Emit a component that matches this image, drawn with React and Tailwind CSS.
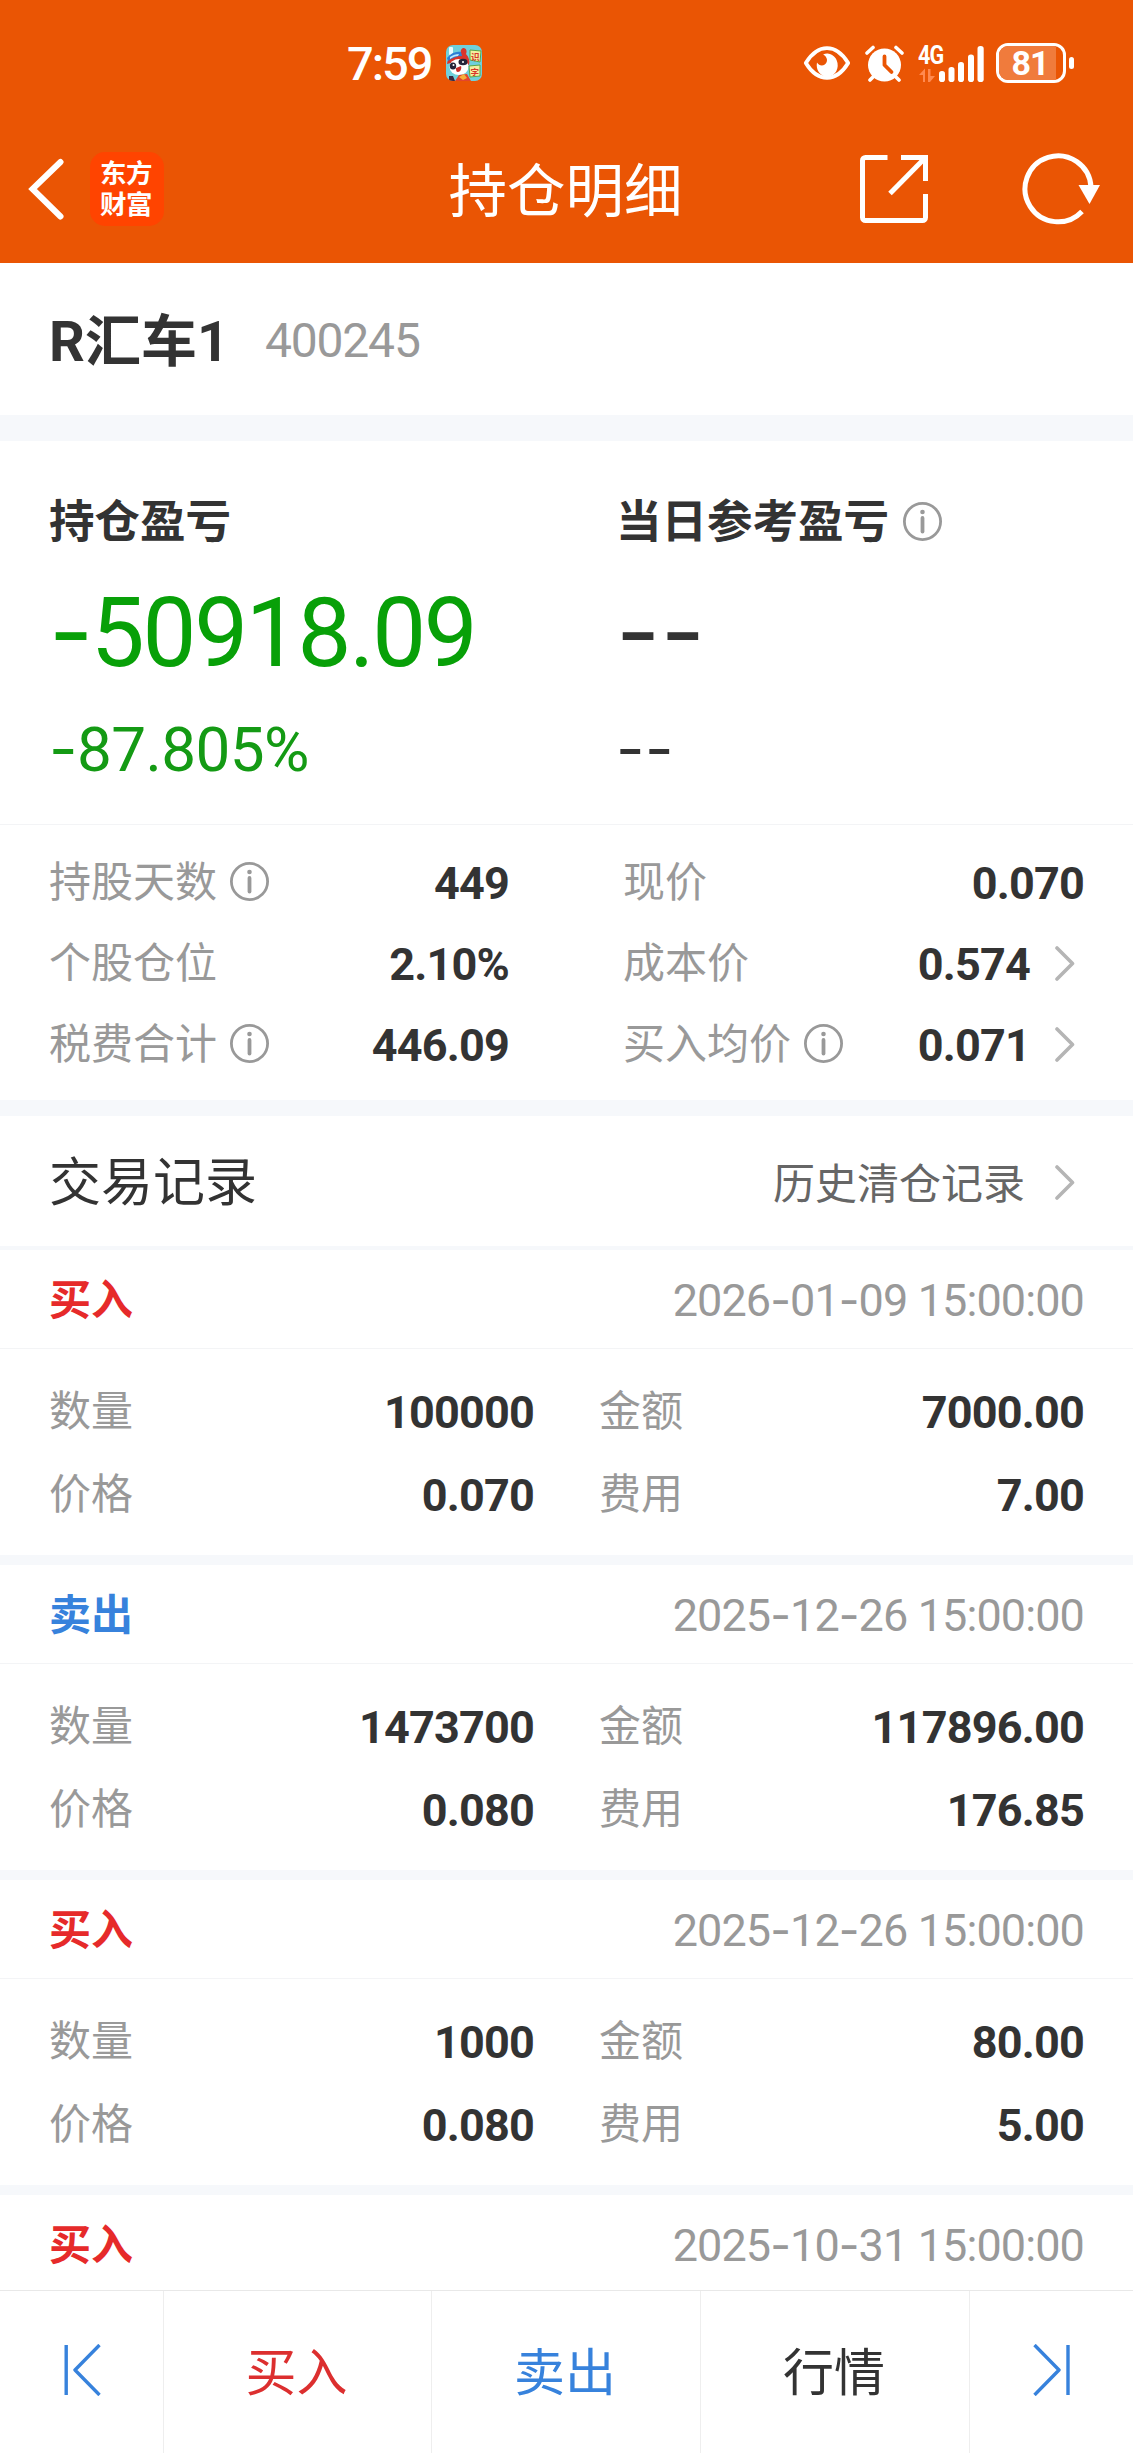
import React from 'react';

const summary = [
  [
    { label: '持股天数', info: true, value: '449' },
    { label: '个股仓位', value: '2.10%' },
    { label: '税费合计', info: true, value: '446.09' },
  ],
  [
    { label: '现价', value: '0.070' },
    { label: '成本价', value: '0.574', link: true },
    { label: '买入均价', info: true, value: '0.071', link: true },
  ],
];

const records = [
  { side: 'buy', time: '2026-01-09 15:00:00', qty: '100000', amount: '7000.00', price: '0.070', fee: '7.00' },
  { side: 'sell', time: '2025-12-26 15:00:00', qty: '1473700', amount: '117896.00', price: '0.080', fee: '176.85' },
  { side: 'buy', time: '2025-12-26 15:00:00', qty: '1000', amount: '80.00', price: '0.080', fee: '5.00' },
  { side: 'buy', time: '2025-10-31 15:00:00' },
];

// Roboto's hyphen is too short next to its digits, so hyphens are set in Inter
function Num({ children, className }) {
  return (
    <span className={className}>
      {children.split(/(-)/).map((part, i) =>
        part === '-' ? <span key={i} className="font-['Inter']">-</span> : part
      )}
    </span>
  );
}

function InfoIcon() {
  return (
    <svg className="w-[39px] h-[39px] shrink-0 mb-0.5" viewBox="0 0 39 39" fill="none">
      <circle cx="19.5" cy="19.5" r="18.1" stroke="#999" strokeWidth="2.8" />
      <circle cx="19.5" cy="10" r="2.3" fill="#999" />
      <path d="M19.5 16v13.5" stroke="#999" strokeWidth="3.8" strokeLinecap="round" />
    </svg>
  );
}

function Chevron() {
  return (
    <svg className="w-5 h-[35px] shrink-0" viewBox="0 0 20 35" fill="none">
      <path d="M2 2l15.5 15.5L2 33" stroke="#b5b5b5" strokeWidth="3.6" strokeLinecap="round" strokeLinejoin="round" />
    </svg>
  );
}

function StatusBar() {
  return (
    <div className="flex items-center h-[126px] pl-[347px] pr-[59px]">
      <span className="text-[47px] font-medium tracking-[-2px]">7:59</span>
      <svg className="w-9 h-9 ml-[14px]" viewBox="0 0 36 36">
        <defs>
          <clipPath id="app"><rect width="36" height="36" rx="7" /></clipPath>
        </defs>
        <g clipPath="url(#app)">
          <rect width="36" height="36" fill="#6fd0dc" />
          <rect x="3" y="2" width="4" height="8" rx="1" fill="#e8fbff" />
          <path d="M1 19C2 11 8 9 15 8c-1-3 1-5 3-5 3 1 3 4 2 6 3 3 4 7 3 11l-8-5z" fill="#d9342b" />
          <path d="M1 13c4-5 9-7 14-6l1 4c-5 0-10 2-14 5z" fill="#2c7fd6" />
          <path d="M4 12c3-2 6-3 9-3l-1 2c-3 0-5 1-8 3z" fill="#bfe9ff" />
          <ellipse cx="13" cy="22" rx="9.500" ry="8" fill="#fff" />
          <ellipse cx="7" cy="21" rx="3.200" ry="3.500" fill="#26243a" />
          <ellipse cx="17" cy="17" rx="4.500" ry="3.200" fill="#26243a" />
          <circle cx="7.500" cy="20" r="1" fill="#fff" />
          <circle cx="17" cy="17" r="1" fill="#fff" />
          <path d="M10 23l5-2c1 3-1 6-3 6s-2-2-2-4z" fill="#c42a2a" />
          <path d="M9 36l4-6 8-1 4 7z" fill="#e2452e" />
          <path d="M13 32l5-3 3 4-4 2z" fill="#f5b03a" />
          <path d="M3 31h4l2 5H3z" fill="#3a2740" />
          <path d="M24 5l11 1-1 11-10-2z" fill="#f3f0a0" stroke="#5aa545" />
          <path d="M23 21l11-1v11l-10 1z" fill="#f3f0a0" stroke="#5aa545" />
          <text x="25" y="14.500" fontSize="8.500" fontWeight="700" fill="#d8352a">识</text>
          <text x="24.500" y="29.500" fontSize="8.500" fontWeight="700" fill="#d8352a">字</text>
        </g>
      </svg>

      <div className="flex items-center ml-auto">
        <svg className="w-12 h-[34px]" viewBox="0 0 48 35" fill="none">
          <path d="M2.200 17.500C8 8 15 2.200 24 2.200S40 8 45.800 17.500C40 27 33 32.800 24 32.800S8 27 2.200 17.500z" stroke="#fff" strokeWidth="4" strokeLinejoin="round" />
          <path d="M20 8.700A10.800 12 0 1 1 13.700 17c2 3.300 5.500 3.700 8 2 3.400-2.400 3.200-7.700-1.700-10.300z" fill="#fff" />
        </svg>
        <svg className="w-[39px] h-[37px] ml-3.5" viewBox="0 0 39 37" fill="none">
          <circle cx="19.500" cy="20" r="16.500" fill="#fff" />
          <path d="M2 8l6-5.500M37 8l-6-5.500M5 35l5-5M34 35l-5-5" stroke="#fff" strokeWidth="3.600" strokeLinecap="round" />
          <path d="M19.500 11.500v8.500l7 7" stroke="#ea5504" strokeWidth="3.800" strokeLinecap="round" strokeLinejoin="round" />
        </svg>
        <div className="relative ml-[15px]">
          <svg className="w-[66px] h-[37px]" viewBox="0 0 66 37">
            <path d="M0 30l6-6.500V37H4v-7zM9 24h2.500v7H16l-5 6H9z" fill="#ff8a50" />
            <rect x="20" y="26" width="6" height="11" rx="2.800" fill="#fff" />
            <rect x="29.500" y="22" width="6" height="15" rx="2.800" fill="#fff" />
            <rect x="39" y="17" width="6" height="20" rx="2.800" fill="#fff" />
            <rect x="49" y="9.500" width="6" height="27.500" rx="2.800" fill="#fff" />
            <rect x="58.500" y="1" width="6.200" height="36" rx="2.800" fill="#fff" />
          </svg>
          <span className="absolute -left-px -top-[2px] text-[25px] font-bold tracking-[-1px] origin-left scale-x-[0.860]">4G</span>
        </div>
        <div className="flex items-center ml-[11px]">
          <div className="relative flex items-center justify-center w-[70px] h-10 rounded-[12px] border-[3px] border-white">
            <div className="absolute left-0 inset-y-0 w-[57px] rounded-l-[9px] bg-[#f07b3c]" />
            <span className="relative text-[34px] font-bold tracking-[-1px] pr-0.5">81</span>
          </div>
          <div className="w-[5px] h-3 ml-[3px] rounded-full bg-white" />
        </div>
      </div>
    </div>
  );
}

function TitleBar() {
  return (
    <div className="relative flex items-center h-[126px] pl-[28px] pr-[33px]">
      <svg className="w-[37px] h-[62px]" viewBox="0 0 37 62" fill="none">
        <path d="M32.500 4L4.500 31l28 27.500" stroke="#fff" strokeWidth="6" strokeLinecap="round" strokeLinejoin="miter" />
      </svg>
      <div className="flex flex-col items-center justify-center w-[74px] h-[74px] ml-[25px] pr-0.5 rounded-[15px] bg-[#ff4400] text-[26.500px] font-bold leading-[31.500px] tracking-[-0.500px]">
        <span>东方</span>
        <span>财富</span>
      </div>
      <h1 className="absolute inset-x-0 text-center text-[58.500px] pt-[7px] pr-0.5">持仓明细</h1>
      <svg className="w-[68px] h-[68px] ml-auto" viewBox="0 0 68 68" fill="none" stroke="#fff" strokeWidth="5">
        <path d="M27.500 2.500H5.500a3 3 0 0 0-3 3v57a3 3 0 0 0 3 3h57a3 3 0 0 0 3-3V39M41 2.500h24.500V26" />
        <path d="M65 3L30 38.500" strokeWidth="5" />
      </svg>
      <svg className="w-[78px] h-[72px] ml-[94px]" viewBox="0 0 78 72" fill="none">
        <path d="M60 58.500A33 33 0 1 1 69 34" stroke="#fff" strokeWidth="5" />
        <path d="M56.500 32H78L67.500 51z" fill="#fff" />
      </svg>
    </div>
  );
}

function Record({ item }) {
  const buy = item.side === 'buy';
  return (
    <div>
      <div className="flex items-center justify-between h-[99px] pl-[49px] pr-[49px] border-b border-[#f3f4f6]">
        <span className={`text-[42px] font-bold pt-[3px] ${buy ? 'text-[#e62a2a]' : 'text-[#3782dc]'}`}>
          {buy ? '买入' : '卖出'}
        </span>
        <Num className="text-[45px] text-[#999] tracking-[-0.900px] pt-0.5">{item.time}</Num>
      </div>
      {item.qty && (
        <div className="h-[216px] pt-[21px] border-b-10 border-[#f6f8fb]">
          <RecordRow left={['数量', item.qty]} right={['金额', item.amount]} />
          <RecordRow left={['价格', item.price]} right={['费用', item.fee]} />
        </div>
      )}
    </div>
  );
}

function RecordRow({ left, right }) {
  return (
    <div className="flex items-center h-[83px] pl-[49px] pr-[49px] text-[42px] text-[#999]">
      <span>{left[0]}</span>
      <span className="w-[401px] text-right text-[45px] font-bold tracking-[-0.800px] text-[#333] pt-px">{left[1]}</span>
      <span className="ml-[65px]">{right[0]}</span>
      <span className="ml-auto text-[45px] font-bold tracking-[-0.800px] text-[#333] pt-px">{right[1]}</span>
    </div>
  );
}

export default function App() {
  return (
    <div className="flex flex-col h-[2453px] w-[1133px] overflow-hidden bg-white text-[#333] leading-none font-['Roboto','Noto_Sans_CJK_SC',sans-serif]">
      <header className="h-[263px] shrink-0 bg-[#ea5504] text-white">
        <StatusBar />
        <TitleBar />
      </header>

      <section className="flex items-center h-[178px] shrink-0 px-[49px] border-b-26 border-[#f6f8fb]">
        <span className="text-[56px] font-bold pt-[5px]">R汇车1</span>
        <span className="ml-[36px] pt-1 text-[48px] text-[#999] tracking-[-1.200px]">400245</span>
      </section>

      <section className="flex h-[384px] shrink-0 pt-[59px] pl-[49px] border-b border-[#f3f4f6]">
        <div className="w-[567px]">
          <h2 className="text-[45.500px] font-bold">持仓盈亏</h2>
          <Num className="block mt-[37px] text-[96px] text-[#08a008] tracking-[-2.300px]">-50918.09</Num>
          <Num className="block mt-[37px] text-[62px] text-[#149a14] tracking-[-0.600px]">-87.805%</Num>
        </div>
        <div>
          <h2 className="flex items-center h-[45.500px] text-[45.500px] font-bold">
            当日参考盈亏
            <span className="ml-[14px]"><InfoIcon /></span>
          </h2>
          <Num className="block mt-[37px] text-[96px] tracking-[0.500px]">--</Num>
          <Num className="block mt-[37px] text-[62px] tracking-[0.500px]">--</Num>
        </div>
      </section>

      <section className="flex h-[291px] shrink-0 pt-[17px] pl-[49px] pr-[49px] border-b-16 border-[#f6f8fb]">
        {summary.map((col, i) => (
          <div key={i} className={i === 0 ? 'w-[460px]' : 'flex-1 ml-[114px]'}>
            {col.map((row) => (
              <div key={row.label} className="flex items-center h-[81px] text-[42px] text-[#999]">
                <span className="mr-[13px]">{row.label}</span>
                {row.info && <InfoIcon />}
                <span className="ml-auto text-[45px] font-bold tracking-[-0.800px] text-[#333] pt-px">{row.value}</span>
                {row.link && <span className="ml-[25px] mr-[9px]"><Chevron /></span>}
              </div>
            ))}
          </div>
        ))}
      </section>

      <section className="flex items-center h-[134px] shrink-0 pl-[49px] pr-[58px] border-b-4 border-[#f6f8fb]">
        <h2 className="pt-[5px] text-[52px]">交易记录</h2>
        <span className="ml-auto mr-[30px] pt-[7px] text-[42px] text-[#666]">历史清仓记录</span>
        <span className="pt-0.5"><Chevron /></span>
      </section>

      <main className="flex-1 overflow-hidden">
        {records.map((item, i) => (
          <Record key={i} item={item} />
        ))}
      </main>

      <nav className="flex h-[163px] shrink-0 border-t border-[#e8e8e8] text-[51px] bg-white">
        <button className="flex items-center w-[164px] pl-[64px] pb-1 border-r border-[#eee]">
          <svg className="w-[37px] h-[52px]" viewBox="0 0 37 52" fill="none" stroke="#3782dc" strokeWidth="3.400">
            <path d="M2.200 1v50M35.500 1L11 26l24.500 25" strokeLinejoin="round" />
          </svg>
        </button>
        <button className="w-[268px] pt-0.5 pr-0.5 border-r border-[#eee] text-[#dc2f2f]">买入</button>
        <button className="w-[269px] pt-0.5 pr-0.5 border-r border-[#eee] text-[#3782dc]">卖出</button>
        <button className="w-[269px] pt-0.5 pr-0.5 border-r border-[#eee]">行情</button>
        <button className="flex flex-1 items-center pl-[63px] pb-1">
          <svg className="w-[37px] h-[52px]" viewBox="0 0 37 52" fill="none" stroke="#3782dc" strokeWidth="3.400">
            <path d="M35 1v50M1.500 1L26 26 1.500 51" strokeLinejoin="round" />
          </svg>
        </button>
      </nav>
    </div>
  );
}
